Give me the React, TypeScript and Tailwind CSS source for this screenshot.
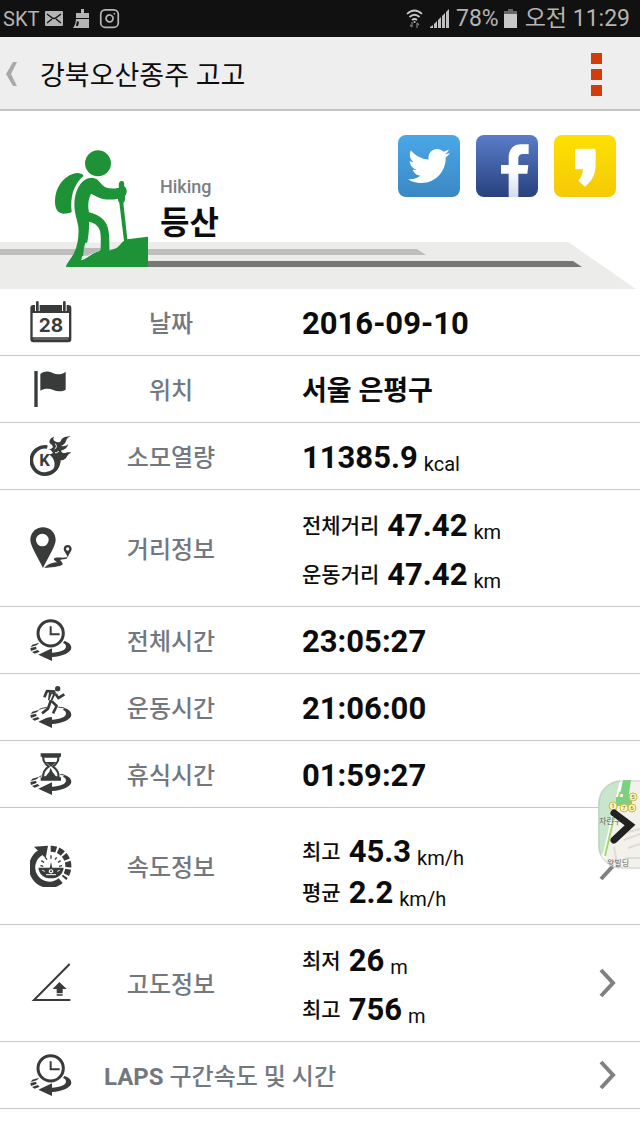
import type { ReactNode } from 'react';
import { Instagram } from 'lucide-react';
import { FaTwitter } from 'react-icons/fa';

type Reading = {
  caption?: string;
  value: string;
  unit?: string;
};

type RowProps = {
  icon: ReactNode;
  label: string;
  readings: Reading[];
  tall?: boolean;
  dense?: boolean;
  place?: boolean;
  link?: boolean;
};

function RowIcon({ children }: { children: ReactNode }) {
  return (
    <svg viewBox="0 0 126 126" className="size-[42px] shrink-0 text-[#383b3a]" fill="currentColor" aria-hidden="true">
      {children}
    </svg>
  );
}

function CalendarIcon() {
  return (
    <RowIcon>
      <rect x="1" y="12" width="123" height="112" rx="9" />
      <path d="M8 36h109v73H8z" fill="#fff" />
      <path d="M10 114h105" stroke="#aaa" strokeWidth="2" />
      <path d="M22 8v22M103 8v22" stroke="#fff" strokeWidth="14" />
      <path d="M22 4v24M103 4v24" stroke="currentColor" strokeWidth="8" strokeLinecap="round" />
      <text x="63" y="92" textAnchor="middle" fontSize="57" fontWeight="700" fontFamily="Inter, sans-serif">
        28
      </text>
    </RowIcon>
  );
}

function FlagIcon() {
  return (
    <RowIcon>
      <path d="M13 9h10v108H13z" />
      <path d="M31 18C45 8 56 10 68 15c14 6 27 5 39-4v54c-12 6-25 6-37 1-13-5-26-5-39 2z" />
    </RowIcon>
  );
}

function CalorieIcon() {
  return (
    <RowIcon>
      <path d="M52 36A41 41 0 1 0 86 78" fill="none" stroke="currentColor" strokeWidth="11" />
      <path d="M57 43C70 42 72 34 63 28 55 22 57 10 72 5c-4 8-1 12 6 15 8 4 13 2 16-6 4-7 15-10 29-11-9 4-13 8-15 15-2 8-8 12-15 15 8 2 16 0 22-6-3 11-11 18-22 20 2 7 8 9 15 6 6-2 11-1 16 0-8 2-11 7-14 13-4 7-10 10-18 10-2 17-12 31-27 38 8-13 11-26 7-37-3-9-9-15-17-20 6 1 10 0 14-3-4-7-8-10-13-11z" />
      <path d="M76 26c5 7 4 12-2 16M86 48c-3 5-7 6-11 5" fill="none" stroke="#fff" strokeWidth="3" />
      <text x="44" y="94" textAnchor="middle" fontSize="50" fontWeight="700" fontFamily="Roboto, sans-serif">
        K
      </text>
    </RowIcon>
  );
}

function RouteIcon() {
  return (
    <RowIcon>
      <path
        fillRule="evenodd"
        d="M39 1C18 1 1 17 1 39c0 18 22 50 38 84 16-34 38-66 38-84C77 17 60 1 39 1zm-2 19a19 19 0 1 1 0 38 19 19 0 0 1 0-38z"
      />
      <path
        fillRule="evenodd"
        d="M113 54c-7 0-12 5-12 12 0 6 8 14 12 25 4-11 12-19 12-25 0-7-5-12-12-12zm0 7a5 5 0 1 1 0 10 5 5 0 0 1 0-10z"
      />
      <path d="M112 90c-8 4-29 0-38 3-7 4 3 10 9 13-12 0-30 4-40 17 18-3 46-3 54-10 4-6-6-10-6-14 9-4 23-1 21-9z" />
    </RowIcon>
  );
}

// Ring arrow shared by the three time icons
function Orbit() {
  return (
    <>
      <path d="M103 66c14 4 21 12 21 20 0 14-26 26-58 28v12L25 107l41-19v13c24-1 42-9 42-18 0-6-4-9-9-11z" />
      <path d="M28 71L7 77l-5 7 18-5zM18 83L1 87l2 9 17-6zM23 93L6 99l8 5 15-6z" />
    </>
  );
}

function TotalTimeIcon() {
  return (
    <RowIcon>
      <Orbit />
      <circle cx="62" cy="43" r="38" fill="#fff" stroke="currentColor" strokeWidth="9" />
      <path d="M62 22v24h27" fill="none" stroke="currentColor" strokeWidth="6" />
    </RowIcon>
  );
}

function ActiveTimeIcon() {
  return (
    <RowIcon>
      <path d="M28 70c14-6 42-10 75-4" fill="none" stroke="currentColor" strokeWidth="3" />
      <Orbit />
      <path d="M78 28L62 55l12 10-8 18-20 2" fill="none" stroke="#fff" strokeWidth="20" />
      <circle cx="83" cy="8" r="8" />
      <path
        d="M76 17L51 15 43 34M75 18L62 45l-8 23-18 14M66 46l14 14-11 22M77 24l8 12 18-11"
        fill="none"
        stroke="currentColor"
        strokeWidth="8"
        strokeLinejoin="round"
      />
      <path d="M57 18l17 2-9 26-11-4z" />
      <path d="M67 24l-7 18" stroke="#fff" strokeWidth="4" />
    </RowIcon>
  );
}

function RestTimeIcon() {
  return (
    <RowIcon>
      <path d="M28 71c14-6 42-10 75-5" fill="none" stroke="currentColor" strokeWidth="3" />
      <Orbit />
      <path d="M35 8h55v70H35z" fill="#fff" />
      <path d="M32 1h61v10H32zM32 73h61v10H32z" />
      <path
        d="M39 11c0 16 9 24 17 30-9 6-17 15-17 32h47c0-17-8-26-17-32 8-6 17-14 17-30z"
        fill="#fff"
        stroke="currentColor"
        strokeWidth="6"
      />
      <path d="M46 27h33L63 41zM62 44l5 12 13 17H45l13-17z" />
    </RowIcon>
  );
}

function SpeedIcon() {
  return (
    <RowIcon>
      <path d="M33 22A52 52 0 1 0 92 107" fill="none" stroke="currentColor" strokeWidth="19" />
      <path d="M12 5l42-3-7 38z" />
      <path
        d="M62 11A53 53 0 0 1 102 99"
        fill="none"
        stroke="currentColor"
        strokeWidth="18"
        strokeDasharray="17 6"
      />
      <path d="M25 68h76c-2 19-16 32-38 32S27 87 25 68z" />
      <path
        d="M31 62l9 2M34 47l8 5M46 37l5 7M63 31v10M80 37l-5 7M92 47l-8 5M96 62l-9 2"
        stroke="currentColor"
        strokeWidth="4"
      />
      <path d="M63 51l5 24H58z" />
      <circle cx="63" cy="79" r="8" fill="#fff" stroke="currentColor" strokeWidth="3" />
      <circle cx="63" cy="79" r="3" />
      <path d="M37 76l7 3M89 76l-7 3M48 89h30" stroke="#fff" strokeWidth="3" />
    </RowIcon>
  );
}

function AltitudeIcon() {
  return (
    <RowIcon>
      <path d="M119 6L12 114h109" fill="none" stroke="currentColor" strokeWidth="6" />
      <path d="M88 60l22 21H98v13H80V81H68zM80 97h18v4H80z" />
    </RowIcon>
  );
}

function HikerIcon() {
  return (
    <svg viewBox="162 60 282 351" className="mt-[15px] h-[117px] w-[94px] shrink-0" fill="#1d9237" aria-hidden="true">
      <circle cx="294" cy="100" r="39" />
      <path d="M251 137c-5-7-17-10-31-6-31 9-54 42-55 80-1 24 8 40 25 40 11 0 20-1 25-5-5-46 5-82 36-109z" />
      <path d="M275 143c15 0 23 11 32 22 11 11 28 13 50 8-2-14 1-20 8-20 7 0 9 6 7 15 6 4 9 10 8 18-1 6-3 9-5 12 1 10-1 17-5 21l12 109 62-8v91H198c2-13 16-24 25-44 11-24 14-50 12-77-5-29-15-48-11-82 4-34 24-65 51-65zM273 191c-9 18-10 37-6 56 29 7 50 22 56 45 6 20 5 46 5 70l20-7c11-6 15-18 24-22l-14-115c-3-3-4-7-4-12-22 5-48 3-63-6z" />
      <path d="M267 276c16 2 29 12 33 27 4 17 2 35 1 57-6 5-17 8-23 11-12 8-22 17-34 20 14-32 24-65 23-115z" fill="#fff" />
      <path d="M252 353h48v8c-12 6-27 10-37 17l-14 3z" fill="#b9bbb9" />
      <path d="M256 338h45v15h-49zM246 379l18-3-20 15z" fill="#ececeb" />
    </svg>
  );
}

function ShareButtons() {
  return (
    <div className="ml-auto flex gap-4">
      <button
        type="button"
        aria-label="Twitter"
        className="flex size-[62px] items-center justify-center rounded-lg bg-linear-to-b from-[#4ba7e8] to-[#3b88c3]"
      >
        <FaTwitter className="size-[42px] text-white" />
      </button>
      <button
        type="button"
        aria-label="Facebook"
        className="size-[62px] overflow-hidden rounded-lg bg-linear-to-b from-[#5a7dc9] to-[#29427f]"
      >
        <svg viewBox="0 0 186 186" className="size-full" aria-hidden="true">
          <defs>
            <linearGradient id="fbLetter" x1="0" y1="0" x2="0" y2="1">
              <stop offset="0.5" stopColor="#fff" />
              <stop offset="1" stopColor="#d5dbec" />
            </linearGradient>
          </defs>
          <path
            fill="url(#fbLetter)"
            d="M98 186v-70H75V90h23V69c0-27 14-41 38-41h22v29h-15c-12 0-16 5-16 15v18h30l-3 26h-27v70z"
          />
        </svg>
      </button>
      <button
        type="button"
        aria-label="KakaoStory"
        className="size-[62px] rounded-lg bg-linear-to-b from-[#fde000] to-[#f5c907]"
      >
        <svg viewBox="0 0 186 186" className="size-full" fill="#fff" aria-hidden="true">
          <path d="M67 41h54q4 0 4 4v45c0 28-12 49-32 65l-20-18c9-10 13-20 14-34H67q-4 0-4-4V45q0-4 4-4z" />
        </svg>
      </button>
    </div>
  );
}

function Chevron() {
  return (
    <svg viewBox="0 0 17 30" className="h-[30px] w-[17px]" fill="none" stroke="#808080" strokeWidth="4" aria-hidden="true">
      <path d="M2 2l12 13L2 28" />
    </svg>
  );
}

function Row({ icon, label, readings, tall, dense, place, link }: RowProps) {
  return (
    <div
      className={`flex items-center border-b border-[#c8c8c8] pr-6 pl-[30px] ${tall ? 'min-h-[117px]' : 'min-h-[67px]'}`}
    >
      {icon}
      <h2 className="w-[198px] shrink-0 pt-1 text-center text-[24px] leading-8 font-medium text-[#73787f]">{label}</h2>
      <div className={`ml-8 flex flex-col ${dense ? 'gap-[9px] pt-3' : 'gap-[17px] pt-1'}`}>
        {readings.map((r) => (
          <p key={r.caption ?? r.value} className="flex items-end">
            {r.caption && <span className="mr-2 self-center text-[21px] leading-7 font-medium">{r.caption}</span>}
            <span className={place ? 'text-[27px] leading-8 font-bold' : 'text-[31px] leading-8 font-bold'}>
              {r.value}
            </span>
            {r.unit && <span className="ml-[6px] text-[20px] leading-5">{r.unit}</span>}
          </p>
        ))}
      </div>
      {link && (
        <a href="#detail" aria-label={label} className="ml-auto">
          <Chevron />
        </a>
      )}
    </div>
  );
}

function MapTab() {
  return (
    <button
      type="button"
      aria-label="지도"
      className="absolute top-[491px] right-0 h-[89px] w-[42px] overflow-hidden rounded-l-3xl"
    >
      <svg viewBox="0 0 42 89" className="size-full" aria-hidden="true">
        <path d="M0 0h42v89H0z" fill="#f3f1ec" />
        <path d="M0 0h26L10 70 0 76z" fill="#c9e6cd" />
        <path d="M24 0L6 78" stroke="#fff" strokeWidth="4" />
        <path d="M22 12L7 76" stroke="#a5d86c" strokeWidth="2" />
        <path d="M25 0h8l-2 14h-9zM18 17h16v9H17zM25 12h6v14h-6z" fill="#7bd17f" />
        <path d="M12 62l14-9 16-4M20 89l-4-22M26 60l16-6M30 68l12-4M27 78h15" fill="none" stroke="#e0dcd3" strokeWidth="2" />
        <g fill="#f8f3b8" stroke="#cdbb4a">
          <circle cx="35" cy="17" r="4" />
          <circle cx="15" cy="26" r="4" />
          <circle cx="26" cy="28" r="4" />
          <circle cx="34" cy="28" r="4" />
        </g>
        <g fontSize="6" fill="#77702f" textAnchor="middle">
          <text x="35" y="19">5</text>
          <text x="15" y="28">1</text>
          <text x="26" y="30">7</text>
          <text x="34" y="30">6</text>
        </g>
        <g fontSize="8" fill="#666">
          <text x="1" y="44">자린구</text>
          <text x="9" y="86">왕빌딩</text>
        </g>
        <path d="M16 33l16 12-16 15" fill="none" stroke="#222" strokeWidth="7" strokeLinecap="round" />
        <path d="M42 1H24Q1 3 1 26v38q0 14 8 18 5 6 15 6h18" fill="none" stroke="#bbb" strokeOpacity="0.6" />
      </svg>
    </button>
  );
}

function StatusBar() {
  return (
    <div className="flex h-[37px] items-center bg-[#111] pr-[10px] pl-[3px] text-[#b4b4b4]">
      <span className="text-[20px]">SKT</span>
      <svg viewBox="0 0 18 15" className="ml-[6px] h-[15px] w-[18px]" aria-hidden="true">
        <rect width="18" height="15" rx="1" fill="#b4b4b4" />
        <path d="M2 3l4 3q3 3 6 0l4-3M2 12l5-4M16 12l-5-4" fill="none" stroke="#111" strokeWidth="1.4" />
      </svg>
      <svg viewBox="0 0 17 19" className="ml-[10px] h-[19px] w-[17px]" fill="#b4b4b4" aria-hidden="true">
        <path d="M8 0h3v4h5v5H3V4h5zM3 10h13v9H0q3-4 3-9zM4 12l-1 5h2l1-4z" fillRule="evenodd" />
      </svg>
      <Instagram className="ml-[9px] size-[21px]" strokeWidth={2} aria-hidden="true" />
      <svg viewBox="0 0 17 20" className="ml-auto h-5 w-[17px]" fill="none" stroke="#c8c8c8" strokeWidth="1.7" aria-hidden="true">
        <path d="M1 5q7.500-7 15 0M3.500 8q5-4.500 10 0M6 11q2.500-2 5 0" />
        <circle cx="8.500" cy="13" r="1" fill="#c8c8c8" stroke="none" />
        <path d="M6 13v5M4 16l2 2M11 19v-5M13 16l-2-2" stroke="#777" strokeWidth="1.300" />
      </svg>
      <svg viewBox="0 0 19 19" className="ml-[7px] h-[19px] w-[19px]" fill="#c0c0c0" aria-hidden="true">
        <path d="M0 19v-1l3-2v3zM4 15l3-3v7H4zM8 11l3-3v11H8zM12 7l3-3v15h-3zM16 3l3-3v19h-3z" />
      </svg>
      <span className="ml-[7px] pt-px text-[23px] leading-8">78%</span>
      <svg viewBox="0 0 13 19" className="ml-[5px] h-[19px] w-[13px]" aria-hidden="true">
        <path d="M4 0h5v2h4v4H0V2h4z" fill="#666" />
        <path d="M0 5h13v14H0z" fill="#c8c8c8" />
      </svg>
      <span className="ml-2 pt-px text-[23px] leading-8">오전 11:29</span>
    </div>
  );
}

const ROWS: RowProps[] = [
  { icon: <CalendarIcon />, label: '날짜', readings: [{ value: '2016-09-10' }] },
  { icon: <FlagIcon />, label: '위치', place: true, readings: [{ value: '서울 은평구' }] },
  { icon: <CalorieIcon />, label: '소모열량', readings: [{ value: '11385.9', unit: 'kcal' }] },
  {
    icon: <RouteIcon />,
    label: '거리정보',
    tall: true,
    readings: [
      { caption: '전체거리', value: '47.42', unit: 'km' },
      { caption: '운동거리', value: '47.42', unit: 'km' },
    ],
  },
  { icon: <TotalTimeIcon />, label: '전체시간', readings: [{ value: '23:05:27' }] },
  { icon: <ActiveTimeIcon />, label: '운동시간', readings: [{ value: '21:06:00' }] },
  { icon: <RestTimeIcon />, label: '휴식시간', readings: [{ value: '01:59:27' }] },
  {
    icon: <SpeedIcon />,
    label: '속도정보',
    tall: true,
    dense: true,
    link: true,
    readings: [
      { caption: '최고', value: '45.3', unit: 'km/h' },
      { caption: '평균', value: '2.2', unit: 'km/h' },
    ],
  },
  {
    icon: <AltitudeIcon />,
    label: '고도정보',
    tall: true,
    link: true,
    readings: [
      { caption: '최저', value: '26', unit: 'm' },
      { caption: '최고', value: '756', unit: 'm' },
    ],
  },
];

export default function App() {
  return (
    <div lang="ko" className="min-h-screen bg-white font-['Roboto','Noto_Sans_CJK_KR',sans-serif] text-[#0c0c0c]">
      <StatusBar />

      <header className="flex h-[74px] items-center border-b-2 border-[#c4c4c4] bg-[#eee] pt-[2px] pr-[38px] pl-[6px]">
        <button type="button" aria-label="뒤로">
          <svg viewBox="0 0 11 24" className="h-6 w-[11px]" fill="#a9a9a9" aria-hidden="true">
            <path d="M7 0h4L5 12l6 12H7L0 12z" />
          </svg>
        </button>
        <h1 className="ml-[23px] pt-1 text-[27px]">강북오산종주 고고</h1>
        <button type="button" aria-label="메뉴" className="ml-auto flex flex-col gap-[5px]">
          <span className="size-[11px] bg-[#d23c0c]" />
          <span className="size-[11px] bg-[#d23c0c]" />
          <span className="size-[11px] bg-[#d23c0c]" />
        </button>
      </header>

      <section className="relative flex items-start pt-6 pr-6 pb-[22px] pl-[54px]">
        <svg
          viewBox="0 0 640 48"
          preserveAspectRatio="none"
          className="absolute inset-x-0 bottom-0 h-12 w-full"
          aria-hidden="true"
        >
          <path d="M0 1h568l68 47H0z" fill="#ececeb" />
          <path d="M0 8h417l9 6H0z" fill="#bdbebd" />
          <path d="M100 20h473l9 6H100z" fill="#777876" />
        </svg>
        <div className="relative flex w-full items-start">
          <HikerIcon />
          <div className="mt-10 ml-3">
            <p className="text-[18px] leading-6 font-medium text-[#7b7f82]">Hiking</p>
            <p className="text-[32px] leading-[48px] font-bold">등산</p>
          </div>
          <ShareButtons />
        </div>
      </section>

      <main className="relative">
        {ROWS.map((row) => (
          <Row key={row.label} {...row} />
        ))}
        <a href="#laps" className="flex min-h-[67px] items-center border-b border-[#c8c8c8] pr-6 pl-[30px]">
          <TotalTimeIcon />
          <span className="ml-8 pt-1 text-[24px] leading-8 font-medium text-[#73787f]">
            <b className="font-bold">LAPS</b> 구간속도 및 시간
          </span>
          <span className="ml-auto">
            <Chevron />
          </span>
        </a>
        <MapTab />
      </main>
    </div>
  );
}
